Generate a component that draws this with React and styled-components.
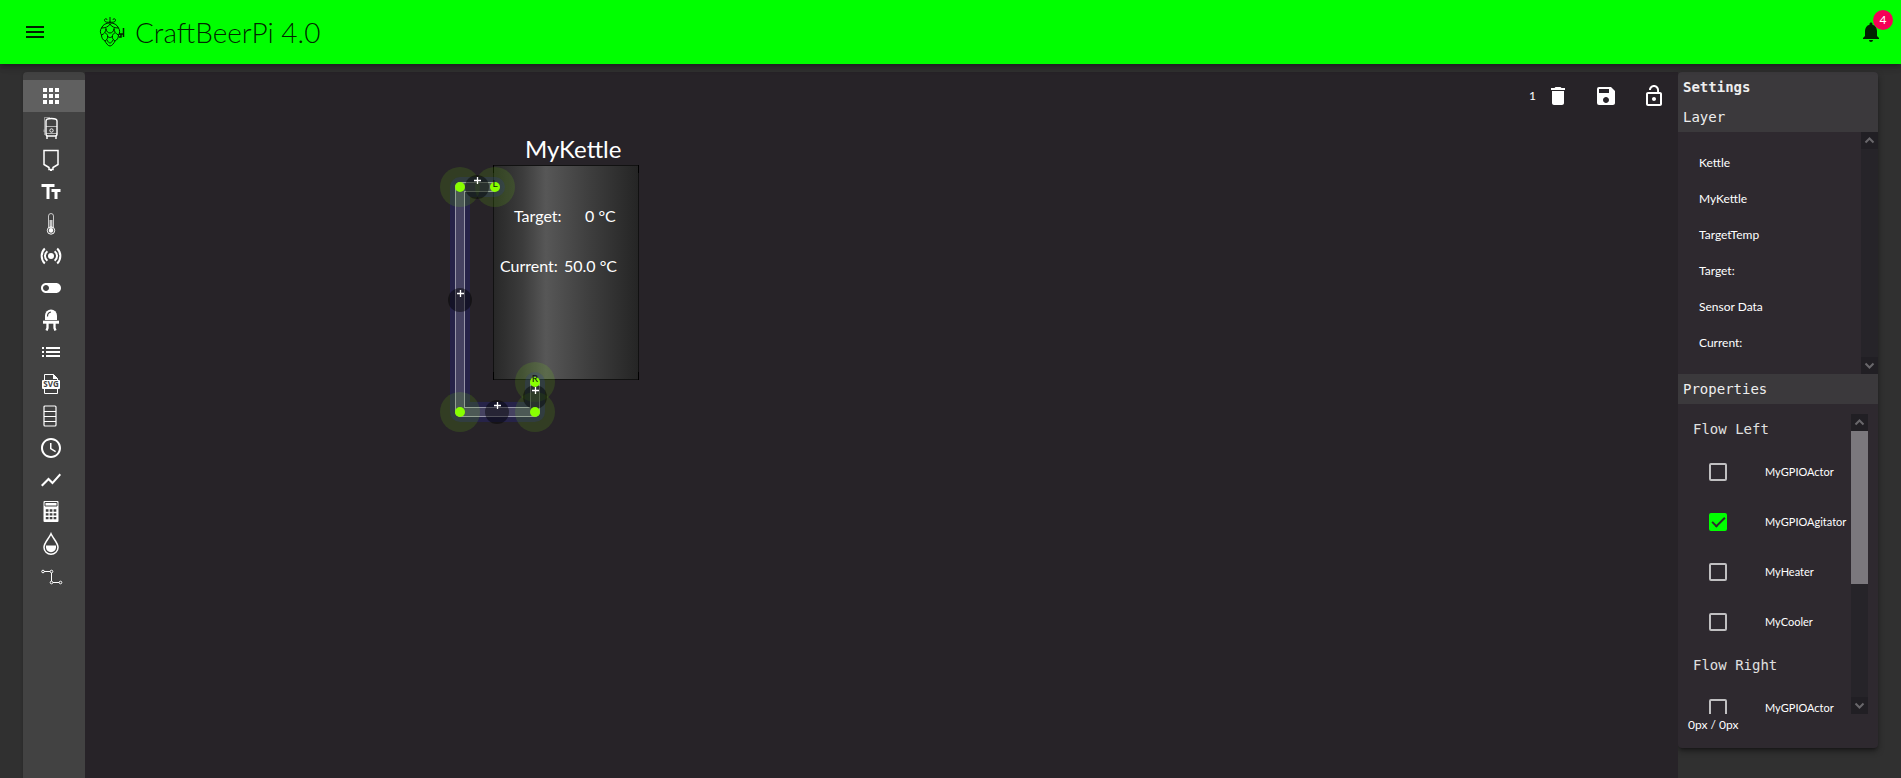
import React, { useState } from "react";
import styled, { createGlobalStyle, css } from "styled-components";
import {
  MdAccessTime,
  MdApps,
  MdDelete,
  MdList,
  MdLockOpen,
  MdMenu,
  MdNotifications,
  MdSave,
  MdShowChart,
  MdTextFields,
  MdToggleOff,
} from "react-icons/md";

const GlobalStyle = createGlobalStyle`
  *, *::before, *::after { box-sizing: border-box; }
  body {
    margin: 0;
    background: #303030;
    color: #fff;
    font: 400 16px/24px Lato, "Liberation Sans", sans-serif;
    overflow: hidden;
  }
  button, input { font: inherit; color: inherit; margin: 0; }
`;

const plainButton = css`
  display: flex;
  align-items: center;
  justify-content: center;
  border: 0;
  padding: 0;
  background: transparent;
  cursor: pointer;
`;

const Page = styled.div`
  display: flex;
  flex-direction: column;
  height: 100vh;
`;

const AppBar = styled.header`
  display: flex;
  flex: none;
  align-items: center;
  height: 64px;
  padding: 0 6px 0 11px;
  background: #00ff00;
  color: rgba(0, 0, 0, 0.87);
  position: relative;
  z-index: 1;
  box-shadow: 0 2px 4px -1px rgba(0, 0, 0, 0.2), 0 4px 5px rgba(0, 0, 0, 0.14),
    0 1px 10px rgba(0, 0, 0, 0.12);
`;

const IconButton = styled.button`
  ${plainButton}
  width: 48px;
  height: 48px;
  position: relative;
  svg { width: 24px; height: 24px; }
`;

const Brand = styled.div`
  display: flex;
  flex: 1;
  align-items: center;
  gap: 10px;
  margin-left: 40px;
`;

const Title = styled.h1`
  margin: 0;
  font-size: 28px;
  line-height: 32px;
  font-weight: 300;
`;

const Badge = styled.span`
  position: absolute;
  top: 2px;
  right: 2px;
  width: 20px;
  height: 20px;
  border-radius: 50%;
  background: #f50057;
  color: #fff;
  font-size: 12px;
  line-height: 20px;
  text-align: center;
`;

const Main = styled.main`
  display: flex;
  flex: 1;
  align-items: flex-start;
  min-height: 0;
  padding: 8px 23px 0;
`;

const Toolbox = styled.nav`
  align-self: stretch;
  flex: none;
  width: 62px;
  padding-top: 8px;
  background: #424242;
  border-radius: 4px 4px 0 0;
  box-shadow: 0 2px 1px -1px rgba(0, 0, 0, 0.2), 0 1px 3px rgba(0, 0, 0, 0.24);
`;

const Tool = styled.button`
  ${plainButton}
  width: 100%;
  height: 32px;
  padding-right: 6px;
  background: ${(p) => (p.$active ? "#606060" : "transparent")};
  svg { width: 24px; height: 24px; flex: none; }
`;

const Board = styled.section`
  align-self: stretch;
  flex: 1;
  min-width: 0;
  position: relative;
  background: #272328;
`;

const BoardActions = styled.div`
  display: flex;
  align-items: center;
  justify-content: flex-end;
`;

const Count = styled.span`
  font-size: 12px;
  margin-right: -2px;
`;

const Drawing = styled.svg`
  position: absolute;
  left: 0;
  top: 0;
  width: 100%;
  height: 100%;
  pointer-events: none;
`;

const Kettle = styled.div`
  position: absolute;
  left: 408px;
  top: 93px;
  width: 146px;
  height: 215px;
  border: 1px solid #111;
  background: linear-gradient(90deg, #282828 0%, #3c3c3c 20%, #575757 36%, #3f3f3f 65%, #252525 100%);
  &::before, &::after {
    content: "";
    position: absolute;
    left: -1px;
    right: -1px;
    height: 8px;
    border: 1px solid #000;
    border-width: 0 1px;
  }
  &::before { top: -1px; }
  &::after { bottom: -1px; }
`;

const BoardText = styled.span`
  position: absolute;
  left: ${(p) => p.$x}px;
  top: ${(p) => p.$y}px;
  font-size: ${(p) => (p.$large ? 24 : 16)}px;
  line-height: 24px;
  white-space: nowrap;
`;

const Panel = styled.aside`
  flex: none;
  width: 200px;
  background: #2e292f;
  border-radius: 4px;
  overflow: hidden;
  box-shadow: 0 3px 3px -2px rgba(0, 0, 0, 0.3), 0 3px 6px rgba(0, 0, 0, 0.4);
`;

const PanelHeading = styled.h2`
  margin: 0;
  padding: 0 5px;
  background: #3b393c;
  color: #eee;
  font: ${(p) => (p.$strong ? 700 : 400)} 14px/30px "DejaVu Sans Mono", "Liberation Mono", monospace;
`;

const ScrollBox = styled.div`
  display: flex;
  height: ${(p) => p.$height}px;
  margin: ${(p) => (p.$inset ? "10px 10px 0" : "0")};
`;

const ScrollContent = styled.div`
  flex: 1;
  min-width: 0;
  overflow-y: auto;
  scrollbar-width: none;
`;

const Rail = styled.div`
  flex: none;
  display: flex;
  flex-direction: column;
  width: 17px;
  background: #262429;
`;

const RailButton = styled.button`
  ${plainButton}
  flex: none;
  height: 17px;
  background: #211f24;
`;

const Track = styled.div`
  flex: 1;
`;

const Thumb = styled.div`
  height: 153px;
  background: #7b787d;
`;

const Layers = styled.ul`
  list-style: none;
  margin: 0;
  padding: 13px 0;
`;

const Layer = styled.button`
  ${plainButton}
  justify-content: flex-start;
  width: 100%;
  height: 36px;
  padding-left: 21px;
  font-size: 12px;
`;

const Groups = styled.div`
  display: flex;
  flex-direction: column;
  gap: 3px;
`;

const GroupTitle = styled.h3`
  margin: 0;
  padding-left: 5px;
  color: #e0e0e0;
  font: 400 14px/30px "DejaVu Sans Mono", "Liberation Mono", monospace;
`;

const Option = styled.label`
  display: flex;
  align-items: center;
  gap: 38px;
  height: 50px;
  padding-left: 21px;
  font-size: 11px;
  white-space: nowrap;
`;

const Tick = styled.input`
  appearance: none;
  flex: none;
  width: 18px;
  height: 18px;
  border: 2px solid #c0bfc1;
  border-radius: 2px;
  position: relative;
  &:checked { background: #00ff00; border-color: #00ff00; }
  &:checked::after {
    content: "";
    position: absolute;
    left: 1px;
    top: 2px;
    width: 13px;
    height: 7px;
    border: solid #2e292f;
    border-width: 0 0 2px 2px;
    transform: rotate(-45deg);
  }
`;

const SizeNote = styled.footer`
  height: 34px;
  padding: 0 10px;
  font-size: 12px;
  line-height: 22px;
`;

const Icon = ({ children, size = 24, ...rest }) => (
  <svg viewBox="0 0 24 24" width={size} height={size} fill="none" stroke="currentColor" aria-hidden="true" {...rest}>
    {children}
  </svg>
);

const HopIcon = () => (
  <svg width="26" height="32" viewBox="0 0 26 32" fill="none" stroke="currentColor" strokeWidth="1" aria-hidden="true">
    <path d="M11 7V1M11 6C9 6.500 6 6.500 5.500 4.500C5.200 2.500 8 2 8 4M11 6C13 6.500 16 6.500 16.500 4.500C16.800 2.500 14 2 14 4" />
    <path d="M2.500 12C4 8.500 7 7 11 7C15 7 18 8.500 19.500 12M2.500 12C6 12 9.500 11 11 8C12.500 11 16 12 19.500 12" />
    <path d="M2.500 12C1 14 1 17 2.500 19C5 18 7 16 7 12M19.500 12C21 14 21 17 19.500 19C17 18 15 16 15 12" />
    <path d="M7 13C7.500 15.500 9 17 11 17C13 17 14.500 15.500 15 13" />
    <path d="M2.500 19C2.500 22 4 24 6 25C8 24 9 22 8.500 19.500C8 18 7 17 6 17M19.500 19C19.500 22 18 24 16 25C14 24 13 22 13.500 19.500C14 18 15 17 16 17" />
    <path d="M8.500 20C9.500 22 12.500 22 13.500 20M6 25C7 27 9 30 11 30C13 30 15 27 16 25M8 24C9 26 10 27 11 27C12 27 13 26 14 24" />
    <path d="M20 18H24M20 21H22V18M24.500 12V21" strokeWidth="1.500" />
  </svg>
);

const KettleIcon = () => (
  <Icon strokeWidth="1.400">
    <path d="M7 5Q7 2.500 12.500 2.500Q18 2.500 18 5V18Q18 20 16 20H9Q7 20 7 18Z" />
    <path d="M7 10.500H18" strokeWidth=".6" />
    <path d="M7 17.500H18" strokeWidth=".6" />
    <circle cx="12.500" cy="14.500" r="1.700" strokeWidth=".9" />
    <path d="M8 20V23M17 20V23" />
    <path d="M11 1.500H5.500V19M5 13.500V16" strokeWidth=".8" opacity=".55" />
  </Icon>
);

const FermenterIcon = () => (
  <Icon strokeWidth="1.500">
    <path d="M5 2.500H19V16.500L14 19.500V21.500H10V19.500L5 16.500Z" />
    <path d="M12 21V23" strokeWidth="2" />
  </Icon>
);

const ThermometerIcon = () => (
  <Icon strokeWidth="1">
    <path d="M9.500 15.500V4Q9.500 1.500 12 1.500Q14.500 1.500 14.500 4V15.500" opacity=".7" />
    <path d="M12 8V19" strokeWidth="3" opacity=".7" />
    <circle cx="12" cy="18.500" r="3.700" />
    <circle cx="12" cy="18.500" r="2.200" fill="currentColor" stroke="none" />
  </Icon>
);

const SensorIcon = () => (
  <Icon strokeWidth="2">
    <circle cx="12" cy="12" r="3" fill="currentColor" stroke="none" />
    <path d="M8.400 7.200A6 6 0 0 0 8.400 16.800M15.600 7.200A6 6 0 0 1 15.600 16.800M5.800 4.500A10.500 10.500 0 0 0 5.800 19.500M18.200 4.500A10.500 10.500 0 0 1 18.200 19.500" />
  </Icon>
);

const LedIcon = () => (
  <Icon>
    <path d="M6 12V7.500A6 6 0 0 1 18 7.500V12Z" fill="currentColor" stroke="none" />
    <path d="M8.500 8.500Q8.500 4.500 12 4" stroke="#424242" strokeWidth="1.200" />
    <path d="M4 14.200H20" strokeWidth="3" />
    <path d="M8.500 15V20L7.500 22.500M15.500 15V20L16.500 22.500" strokeWidth="2.300" />
  </Icon>
);

const SvgFileIcon = () => (
  <Icon strokeWidth="1">
    <path d="M5.500 8V2.500H14.500L18.500 6.500V8M5.500 17V21.500H18.500V17" />
    <path d="M14 2V7H19Z" fill="currentColor" stroke="none" />
    <rect x="3" y="8" width="18" height="9" rx="1" fill="currentColor" stroke="none" />
    <text x="12" y="15" fill="#424242" stroke="none" textAnchor="middle" fontFamily="Open Sans, sans-serif" fontWeight="700" fontSize="8">SVG</text>
  </Icon>
);

const TankIcon = () => (
  <Icon strokeWidth="1">
    <rect x="5" y="2" width="12" height="20" rx="1" strokeWidth="1.200" />
    <path d="M5 7.500H17M5 12.500H17M5 17.500H17" />
  </Icon>
);

const CalculatorIcon = () => (
  <Icon>
    <rect x="4.500" y="1" width="15" height="21" rx="1" fill="currentColor" stroke="none" />
    <path d="M6 2.500H18V6H6Z" stroke="#424242" strokeWidth="1" />
    <path d="M6.800 10.500H17.500M6.800 14.300H17.500M6.800 18.200H17.500" stroke="#424242" strokeWidth="2.300" strokeDasharray="2.700 1.200" />
  </Icon>
);

const DropIcon = () => (
  <Icon strokeWidth="1.500">
    <path d="M12 1.800C10 6.500 5 10.500 5 15.500A7 6.700 0 0 0 19 15.500C19 10.500 14 6.500 12 1.800Z" />
    <path d="M7 13.500H17V15.500A5 4.700 0 0 1 7 15.500Z" fill="currentColor" stroke="none" />
  </Icon>
);

const PathIcon = () => (
  <Icon strokeWidth="1">
    <path d="M5 7.500H11M12.500 9V17M14 18.500H20" />
    <circle cx="4" cy="7.500" r="1.300" />
    <circle cx="12.500" cy="7.500" r="1.300" />
    <circle cx="12.500" cy="18.500" r="1.300" />
    <circle cx="21.500" cy="18.500" r="1.300" />
  </Icon>
);

const Chevron = ({ up }) => (
  <svg width="17" height="17" viewBox="0 0 17 17" fill="none" stroke="#69676b" strokeWidth="2" aria-hidden="true">
    <path d={up ? "M4.500 10.500L8.500 6.500L12.500 10.500" : "M4.500 6.500L8.500 10.500L12.500 6.500"} />
  </svg>
);

const tools = [
  ["Select", MdApps],
  ["Kettle", KettleIcon],
  ["Fermenter", FermenterIcon],
  ["Text", MdTextFields],
  ["Temperature", ThermometerIcon],
  ["Sensor", SensorIcon],
  ["Switch", MdToggleOff],
  ["LED", LedIcon],
  ["List", MdList],
  ["SVG", SvgFileIcon],
  ["Tank", TankIcon],
  ["Clock", MdAccessTime],
  ["Chart", MdShowChart],
  ["Calculator", CalculatorIcon],
  ["Volume", DropIcon],
  ["Pipe", PathIcon],
];

const layers = ["Kettle", "MyKettle", "TargetTemp", "Target:", "Sensor Data", "Current:"];
const actors = ["MyGPIOActor", "MyGPIOAgitator", "MyHeater", "MyCooler"];

const pipe = "M410 115H375V340H450V310";
const joints = [[375, 115], [410, 115, "L"], [375, 340], [450, 340], [450, 310, "R"]];
const inserts = [[392, 115], [375, 228], [412, 340], [450, 325]];

const PipeDrawing = () => (
  <Drawing>
    <g fill="none" strokeLinejoin="round">
      <path d={pipe} stroke="#2222aa" strokeOpacity=".25" strokeWidth="20" strokeLinecap="round" />
      <path d={pipe} stroke="#9695a8" strokeWidth="10" />
      <path d={pipe} stroke="#454261" strokeWidth="8" />
    </g>
    {joints.map(([x, y]) => (
      <circle key={`${x}-${y}`} cx={x} cy={y} r="20" fill="#80ff00" fillOpacity=".12" />
    ))}
    {inserts.map(([x, y]) => (
      <g key={`${x}-${y}`}>
        <circle cx={x} cy={y} r="12" fill="#000" fillOpacity=".45" />
        <path d={`M${x - 3} ${y - 6.5}h7M${x + 0.5} ${y - 10}v7`} stroke="#fff" strokeWidth="1.300" />
      </g>
    ))}
    {joints.map(([x, y, label]) => (
      <g key={`${x}-${y}`}>
        <circle cx={x} cy={y} r="5" fill="#88ff00" />
        {label && (
          <text x={x} y={y} textAnchor="middle" fontSize="10" fill="#101010">{label}</text>
        )}
      </g>
    ))}
  </Drawing>
);

const ScrollRail = ({ thumb }) => (
  <Rail>
    <RailButton aria-label="Scroll up"><Chevron up /></RailButton>
    <Track>{thumb && <Thumb />}</Track>
    <RailButton aria-label="Scroll down"><Chevron /></RailButton>
  </Rail>
);

const FlowGroup = ({ title, initial }) => {
  const [selected, setSelected] = useState(initial);
  return (
    <>
      <GroupTitle>{title}</GroupTitle>
      <div>
        {actors.map((name) => (
          <Option key={name}>
            <Tick
              type="checkbox"
              checked={selected === name}
              onChange={() => setSelected(selected === name ? null : name)}
            />
            {name}
          </Option>
        ))}
      </div>
    </>
  );
};

export default function App() {
  return (
    <Page>
      <GlobalStyle />
      <AppBar>
        <IconButton aria-label="Menu"><MdMenu /></IconButton>
        <Brand>
          <HopIcon />
          <Title>CraftBeerPi 4.0</Title>
        </Brand>
        <IconButton aria-label="Notifications">
          <MdNotifications />
          <Badge>4</Badge>
        </IconButton>
      </AppBar>
      <Main>
        <Toolbox>
          {tools.map(([name, ToolIcon], i) => (
            <Tool key={name} aria-label={name} $active={i === 0}><ToolIcon /></Tool>
          ))}
        </Toolbox>
        <Board>
          <Kettle />
          <BoardText $x={440} $y={65} $large>MyKettle</BoardText>
          <BoardText $x={429} $y={132}>Target:</BoardText>
          <BoardText $x={500} $y={132}>0 °C</BoardText>
          <BoardText $x={415} $y={182}>Current:</BoardText>
          <BoardText $x={479} $y={182}>50.0 °C</BoardText>
          <PipeDrawing />
          <BoardActions>
            <Count>1</Count>
            <IconButton aria-label="Delete"><MdDelete /></IconButton>
            <IconButton aria-label="Save"><MdSave /></IconButton>
            <IconButton aria-label="Unlock"><MdLockOpen /></IconButton>
          </BoardActions>
        </Board>
        <Panel>
          <PanelHeading $strong>Settings</PanelHeading>
          <PanelHeading>Layer</PanelHeading>
          <ScrollBox $height={242}>
            <ScrollContent>
              <Layers>
                {layers.map((name) => (
                  <li key={name}><Layer>{name}</Layer></li>
                ))}
              </Layers>
            </ScrollContent>
            <ScrollRail />
          </ScrollBox>
          <PanelHeading>Properties</PanelHeading>
          <ScrollBox $height={300} $inset>
            <ScrollContent>
              <Groups>
                <FlowGroup title="Flow Left" initial="MyGPIOAgitator" />
                <FlowGroup title="Flow Right" initial={null} />
              </Groups>
            </ScrollContent>
            <ScrollRail thumb />
          </ScrollBox>
          <SizeNote>0px / 0px</SizeNote>
        </Panel>
      </Main>
    </Page>
  );
}
